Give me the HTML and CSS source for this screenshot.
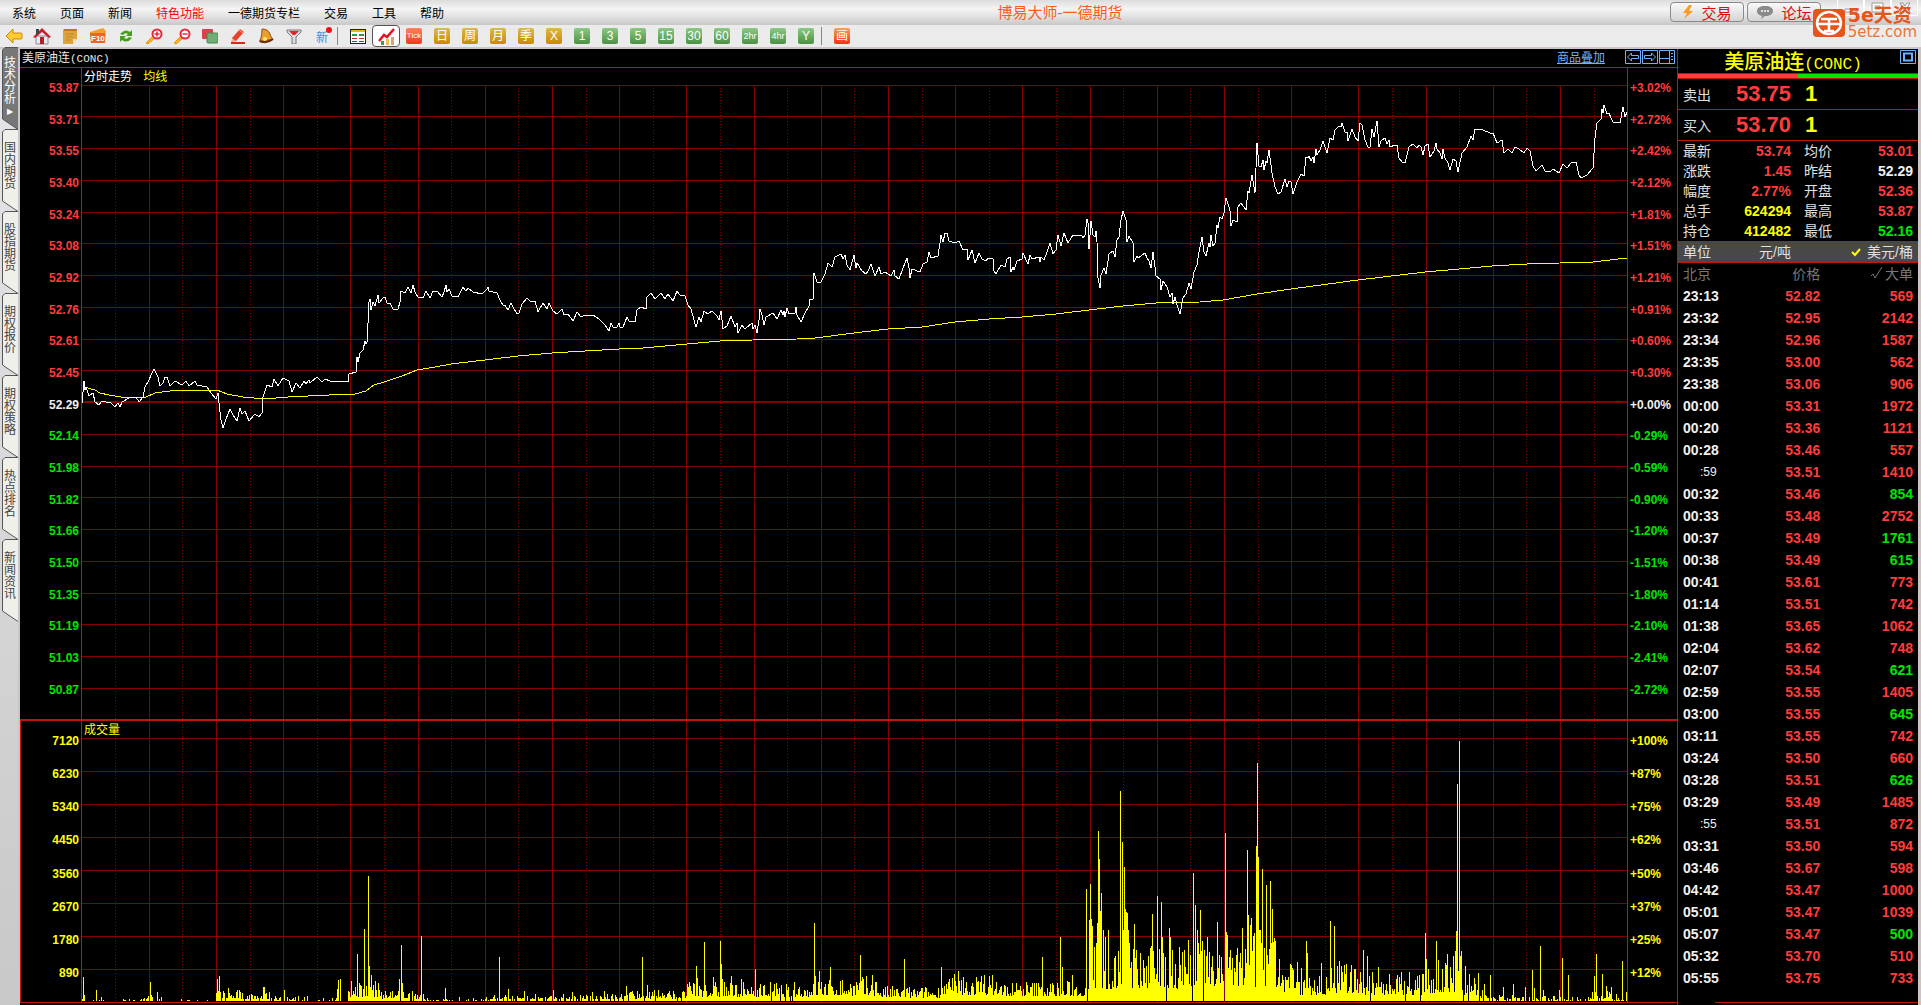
FILE: index.html
```html
<!DOCTYPE html>
<html lang="zh-CN">

<head>
    <meta charset="utf-8">
    <meta name="viewport" content="width=device-width, initial-scale=1" />
    <title>博易大师-一德期货</title>
    <link rel="stylesheet" href="styles.css">
</head>

<body>
    <header class="menubar">
        <nav class="menu">
            <button>系统</button>
            <button>页面</button>
            <button>新闻</button>
            <button class="hot">特色功能</button>
            <button>一德期货专栏</button>
            <button>交易</button>
            <button>工具</button>
            <button>帮助</button>
        </nav>
        <h1 class="app-title">博易大师-一德期货</h1>
        <div class="quick">
            <button class="pill">
                <svg width="12" height="14" viewBox="0 0 12 14"><path d="M7 0 1 8h4l-3 6 9-8H7l3-6z" fill="#ff9a1e" /></svg>交易
            </button>
            <button class="pill">
                <svg width="18" height="14" viewBox="0 0 18 14"><path d="M9 1c5 0 8 2 8 5s-3 5-8 5l-4 3 1-3C3 10 1 9 1 6s3-5 8-5z" fill="#8a8a8a" /><path d="M5 6h2M8 6h2M11 6h2" stroke="#fff" stroke-width="1.5" /></svg>论坛
            </button>
        </div>
        <div class="window-buttons">
            <button aria-label="最小化"><svg width="24" height="16" viewBox="0 0 24 16"><path d="M6 9h12v3H6z" fill="#fff" stroke="#999" /></svg></button>
            <button aria-label="最大化"><svg width="24" height="16" viewBox="0 0 24 16"><path d="M6 3h11v9H6zM9 6h5v3H9z" fill="#fff" stroke="#999" fill-rule="evenodd" /></svg></button>
            <button aria-label="关闭"><svg width="24" height="16" viewBox="0 0 24 16"><path d="M7 3h3l2 3 2-3h3l-3 5 3 4h-3l-2-3-2 3H7l3-4z" fill="#fff" stroke="#999" /></svg></button>
        </div>
        <div class="brand">
            <svg width="32" height="28" viewBox="0 0 32 28">
                <rect width="32" height="28" rx="4" fill="#e4551b" />
                <ellipse cx="16" cy="14" rx="12" ry="11" fill="none" stroke="#fff" stroke-width="2.5" />
                <path d="M8 10h16M4 15h24M16 10v12M11 22h10" fill="none" stroke="#fff" stroke-width="2.5" />
            </svg>
            <div class="brand-text"><b>5e天资</b><span>5etz.com</span></div>
        </div>
    </header>

    <div class="toolbar">
        <button aria-label="后退"><svg width="18" height="16" viewBox="0 0 18 16"><path d="M1 8 8 1v4h8q1 0 1 1v4q0 1-1 1H8v4z" fill="#ffcb2e" stroke="#c98a10" /></svg></button>
        <button aria-label="首页"><svg width="18" height="18" viewBox="0 0 18 18"><path d="M3 9h12v8H3z" fill="#e9e9ee" stroke="#8a8a95" /><path d="M0 10 9 1l9 9-2 1-7-6-7 6z" fill="#cf1c2c" /><path d="M3 2h3v4L3 8z" fill="#444" /><path d="M7 10h4v7H7z" fill="#b3202d" /></svg></button>
        <button aria-label="便签"><svg width="16" height="16" viewBox="0 0 16 16"><path d="M2 1h13v10l-4 5H1V2z" fill="#dca43a" /><path d="M11 16v-5h4z" fill="#fbe3a2" /><path d="M2 1h13v2H2z" fill="#b97d1d" /><path d="M4 6h8M4 9h7M4 12h5" stroke="#c08628" /></svg></button>
        <button aria-label="F10"><svg width="18" height="16" viewBox="0 0 18 16"><path d="M1 4 14 0l3 3-1 12H2z" fill="#f2a12a" /><path d="M1 5h15v10H2z" fill="#ee6426" /><text x="2" y="13" class="f10">F10</text></svg></button>
        <button aria-label="刷新"><svg width="16" height="16" viewBox="0 0 16 16"><path d="M2 6q5-6 10-2l2-2v6H8l2-2Q7 4 5 7zM14 10q-5 6-10 2l-2 2V8h6l-2 2q3 2 5-1z" fill="#45a01e" /></svg></button>
        <button aria-label="放大"><svg width="18" height="17" viewBox="0 0 18 17"><path d="m1 15 7-7 2 2-7 6z" fill="#ffb52a" stroke="#e39210" /><circle cx="12" cy="6" r="4.500" fill="#fff" stroke="#e8283a" stroke-width="2" /><path d="M9.500 6h5M12 3.500v5" stroke="#e8283a" stroke-width="1.500" /></svg></button>
        <button aria-label="缩小"><svg width="18" height="17" viewBox="0 0 18 17"><path d="m1 15 7-7 2 2-7 6z" fill="#ffb52a" stroke="#e39210" /><circle cx="12" cy="6" r="4.500" fill="#fff" stroke="#e8283a" stroke-width="2" /><path d="M9.500 6h5" stroke="#e8283a" stroke-width="1.500" /></svg></button>
        <button aria-label="叠加"><svg width="16" height="16" viewBox="0 0 16 16"><rect x="0" y="1" width="11" height="10" rx="1" fill="#dc4149" /><rect x="5" y="5" width="11" height="10" rx="1" fill="#6fae76" stroke="#448a4e" /></svg></button>
        <button aria-label="画笔"><svg width="16" height="17" viewBox="0 0 16 17"><path d="M2 10 10 1l4 3-8 9-4 1z" fill="#e7432b" /><path d="m2 10 4 3-5 2z" fill="#e9b58a" /><path d="m9 2 4 3" stroke="#ff9d80" /><path d="M1 15h14" stroke="#d52a1c" stroke-width="2" /></svg></button>
        <button aria-label="预警"><svg width="16" height="16" viewBox="0 0 16 16"><path d="M4 1q6 0 8 5 1 4 3 5L2 14q-1-1 1-4 1-4 1-9z" fill="#e8a02c" stroke="#9a4a10" /><path d="M2 13q7 3 13-2" fill="none" stroke="#74290a" stroke-width="2" /><circle cx="7" cy="11" r="2" fill="#ffe27a" /></svg></button>
        <button aria-label="筛选"><svg width="16" height="16" viewBox="0 0 16 16"><path d="M1 2h14v2l-5 5v7H6V9L1 4z" fill="#dadde0" stroke="#777" /><path d="M3 3h10L9 7H7z" fill="#e3232c" /></svg></button>
        <button aria-label="新功能"><span class="new">新</span></button>
        <span class="sep"></span>
        <button aria-label="报价表"><svg width="16" height="15" viewBox="0 0 16 15" shape-rendering="crispEdges"><rect x="0" y="0" width="16" height="15" fill="#fff" stroke="#222" stroke-width="2" /><path d="M1 1h14v2H1z" fill="#f0b325" /><path d="M2 6h5M9 6h5" stroke="#299b38" stroke-width="2" /><path d="M2 9h5M9 9h5" stroke="#cc2a2a" stroke-width="1" /><path d="M2 12h5M9 12h5" stroke="#2554b4" stroke-width="1" /></svg></button>
        <button class="active" aria-label="分时图"><svg width="18" height="17" viewBox="0 0 18 17"><path d="M4 13h3v4H4z" fill="#3f9e43" /><path d="M9 11h3v6H9z" fill="#f1bb55" /><path d="M14 9h3v8h-3z" fill="#d3aa6b" /><path d="m2 13 5-6 3 2 7-8" fill="none" stroke="#e6141d" stroke-width="2.500" /></svg></button>
        <button><span class="key tick">Tick</span></button>
        <button><span class="key gold">日</span></button>
        <button><span class="key gold">周</span></button>
        <button><span class="key gold">月</span></button>
        <button><span class="key gold">季</span></button>
        <button><span class="key gold">X</span></button>
        <button><span class="key">1</span></button>
        <button><span class="key">3</span></button>
        <button><span class="key">5</span></button>
        <button><span class="key">15</span></button>
        <button><span class="key">30</span></button>
        <button><span class="key">60</span></button>
        <button><span class="key small">2hr</span></button>
        <button><span class="key small">4hr</span></button>
        <button><span class="key">Y</span></button>
        <span class="sep"></span>
        <button><span class="key draw">画</span></button>
    </div>

    <main class="workspace">
        <nav class="tabs">
            <button class="on"><svg viewBox="0 0 16 83"><path d="M16 .5H3L.5 3v69L16 82.500" /></svg><span>技术分析</span><i>▶</i></button>
            <button><svg viewBox="0 0 16 83"><path d="M16 .5H3L.5 3v69L16 82.500" /></svg><span>国内期货</span></button>
            <button><svg viewBox="0 0 16 83"><path d="M16 .5H3L.5 3v69L16 82.500" /></svg><span>股指期货</span></button>
            <button><svg viewBox="0 0 16 83"><path d="M16 .5H3L.5 3v69L16 82.500" /></svg><span>期权报价</span></button>
            <button><svg viewBox="0 0 16 83"><path d="M16 .5H3L.5 3v69L16 82.500" /></svg><span>期权策略</span></button>
            <button><svg viewBox="0 0 16 83"><path d="M16 .5H3L.5 3v69L16 82.500" /></svg><span>热点排名</span></button>
            <button><svg viewBox="0 0 16 83"><path d="M16 .5H3L.5 3v69L16 82.500" /></svg><span>新闻资讯</span></button>
        </nav>

        <section class="chart">
            <div class="chart-head">
                <span>美原油连<span class="code">(CONC)</span></span>
                <a href="#overlay">商品叠加</a>
                <div class="nav-icons">
                    <button aria-label="上一个"><svg width="16" height="14" viewBox="0 0 16 14"><path d="M.5.5h15v13H.5zM2.500 7l4-4v2.500h7v3h-7V11z" /></svg></button>
                    <button aria-label="下一个"><svg width="16" height="14" viewBox="0 0 16 14"><path d="M.5.5h15v13H.5zM13.500 7l-4-4v2.500h-7v3h7V11z" /></svg></button>
                    <button aria-label="布局"><svg width="16" height="14" viewBox="0 0 16 14"><path d="M.5.5h15v13H.5zM.5 8.500h10M10.500.5v13M12 3.500h2M12 6.500h2M12 9.500h2" /></svg></button>
                </div>
            </div>
            <div class="pane price">
                <ol class="axis left" id="prices"></ol>
                <div class="plot">
                    <p class="legend">分时走势 <span>均线</span></p>
                    <svg viewBox="82 68 1545 651" preserveAspectRatio="none">
                        <path class="grid" id="priceGrid" />
                        <path class="grid dotted" id="priceDots" />
                        <path class="zero" d="M82 402H1627" />
                        <polyline class="avg" id="avgLine" />
                        <polyline class="last" id="lastLine" />
                    </svg>
                </div>
                <ol class="axis right" id="percents"></ol>
            </div>
            <div class="pane volume">
                <ol class="axis left" id="volumes"></ol>
                <div class="plot">
                    <p class="legend"><span>成交量</span></p>
                    <svg viewBox="82 721 1545 281" preserveAspectRatio="none">
                        <path class="grid" id="volumeGrid" />
                        <path class="grid dotted" id="volumeDots" />
                        <path class="bars" id="bars" />
                    </svg>
                </div>
                <ol class="axis right" id="shares"></ol>
            </div>
        </section>

        <aside class="quote">
            <div class="quote-head">
                <h2>美原油连<span>(CONC)</span></h2>
                <button aria-label="还原"><svg width="16" height="14" viewBox="0 0 16 14"><path d="M.5.5h15v13H.5z" /><path d="M4 3.500h8v7H4z" stroke-width="2" /></svg></button>
            </div>
            <div class="ratio"></div>
            <div class="offer"><span>卖出</span><b>53.75</b><b class="yellow">1</b></div>
            <div class="offer"><span>买入</span><b>53.70</b><b class="yellow">1</b></div>
            <div class="stats">
                <span>最新</span><b>53.74</b><span>均价</span><b>53.01</b>
                <span>涨跌</span><b>1.45</b><span>昨结</span><b class="white">52.29</b>
                <span>幅度</span><b>2.77%</b><span>开盘</span><b>52.36</b>
                <span>总手</span><b class="yellow">624294</b><span>最高</span><b>53.87</b>
                <span>持仓</span><b class="yellow">412482</b><span>最低</span><b class="green">52.16</b>
            </div>
            <div class="unit">
                <span>单位</span><span>元/吨</span>
                <span><svg width="10" height="10" viewBox="0 0 10 10"><path d="m1 5 3 3 5-6" /></svg>美元/桶</span>
            </div>
            <table class="ticks">
                <thead>
                    <tr><th>北京</th><th>价格</th><th><svg width="12" height="12" viewBox="0 0 12 12"><path d="m0 9 2-2 2 4L11 0" /></svg>大单</th></tr>
                </thead>
                <tbody id="ticks"></tbody>
            </table>
            <div class="quote-foot"></div>
        </aside>
    </main>
    <script src="script.js"></script>
</body>

</html>
```

FILE: styles.css
```css
* {
    box-sizing: border-box;
}

body {
    margin: 0;
    height: 100vh;
    display: flex;
    flex-direction: column;
    overflow: hidden;
    font: 12px "Liberation Sans", "Noto Sans CJK SC", sans-serif;
    background: #ebebeb;
    color: #000;
}

button {
    border: 0;
    padding: 0;
    background: none;
    font: inherit;
    color: inherit;
}

h1, h2, p, ol {
    margin: 0;
    padding: 0;
    font-weight: normal;
    list-style: none;
}

svg {
    flex: none;
}

/* menu bar */
.menubar {
    position: relative;
    flex: none;
    height: 25px;
    display: flex;
    background: linear-gradient(#dcdcdc, #f4f4f4 35%, #e6e6e6 60%, #c8c8c8);
}

.menu {
    display: flex;
}

.menu button {
    padding: 0 12px;
}

.menu .hot {
    color: #f00;
}

.app-title {
    flex: 1;
    padding-right: 6px;
    text-align: center;
    font-size: 15px;
    line-height: 25px;
    color: #ff5a1e;
}

.quick {
    display: flex;
    gap: 3px;
    padding-top: 2px;
}

.pill {
    width: 74px;
    height: 20px;
    display: flex;
    align-items: center;
    justify-content: center;
    gap: 7px;
    border: 1px solid #8a8a8a;
    border-radius: 4px;
    background: linear-gradient(#fafafa, #d4d4d4);
    color: #d80f0f;
    font-size: 15px;
}

.window-buttons {
    display: flex;
    padding: 0 3px 0 16px;
}

.window-buttons button {
    width: 27px;
    height: 16px;
    border: 1px solid #fff;
    border-top: 0;
}

.brand {
    position: absolute;
    z-index: 1;
    right: 4px;
    top: 9px;
    display: flex;
    gap: 3px;
}

.brand-text {
    display: flex;
    flex-direction: column;
    margin-top: -3px;
    font-family: "DejaVu Sans", "Noto Sans CJK SC", sans-serif;
    color: #e8743c;
}

.brand-text b {
    font-size: 19px;
    line-height: 19px;
    color: #e4551b;
}

.brand-text span {
    font-size: 15px;
    line-height: 15px;
}

/* toolbar */
.toolbar {
    flex: none;
    height: 24px;
    display: flex;
    border-bottom: 2px solid #cdc5c5;
}

.toolbar button {
    width: 28px;
    display: flex;
    align-items: center;
    justify-content: center;
}

.toolbar .active {
    border: 1px solid #555;
    border-radius: 4px;
    background: #fff;
}

.sep {
    width: 2px;
    margin: 2px 5px 2px 1px;
    border-left: 1px solid #888;
}

.f10 {
    font: bold 8px "Liberation Sans", sans-serif;
    fill: #fff;
}

.new {
    position: relative;
    color: #3d8fe6;
}

.new::after {
    content: "";
    position: absolute;
    top: -1px;
    right: -4px;
    width: 6px;
    height: 6px;
    border-radius: 50%;
    background: #f01414;
}

.key {
    width: 16px;
    height: 16px;
    border-radius: 2px;
    overflow: hidden;
    font: 12px/16px "Liberation Sans", "Noto Sans CJK SC", sans-serif;
    text-align: center;
    color: #fff;
    background: linear-gradient(#8cc885, #4b9143);
}

.key.gold {
    background: linear-gradient(#d8bb50, #cc8800);
}

.key.tick, .key.small {
    font-size: 9px;
}

.key.tick {
    font-size: 8px;
    background: linear-gradient(#ff8060, #ee3a1e);
}

.key.draw {
    background: linear-gradient(#ffa050, #f23018);
}

/* workspace */
.workspace {
    flex: 1;
    min-height: 0;
    display: grid;
    grid-template-columns: 18px 1fr 240px;
    padding-right: 3px;
    background: #cdc5c5;
}

.tabs {
    padding-left: 2px;
    background: linear-gradient(#e6e6ea, #c8c8c8);
}

.tabs button {
    position: relative;
    display: flex;
    flex-direction: column;
    align-items: center;
    justify-content: flex-start;
    width: 16px;
    height: 82px;
    padding-top: 13px;
    color: #444;
}

.tabs svg {
    position: absolute;
    top: 0;
    left: 0;
    width: 16px;
    height: 83px;
    fill: #f0f0ea;
    stroke: #555;
}

.tabs span {
    position: relative;
    width: 12px;
    line-height: 12px;
    word-break: break-all;
}

.tabs .on {
    height: 80px;
    padding-top: 8px;
    color: #fff;
}

.tabs .on svg {
    top: -2px;
    fill: #777;
}

.tabs i {
    position: relative;
    font: 8px/14px "DejaVu Sans", sans-serif;
}

.chart {
    display: flex;
    flex-direction: column;
    margin-left: 2px;
    padding-bottom: 2px;
    border-right: 1px solid #c41410;
    background: #000;
    color: #e8e8e8;
}

.chart-head {
    flex: none;
    height: 19px;
    display: flex;
    padding: 1px 2px 0;
    line-height: 16px;
    border-bottom: 1px solid #c41410;
}

.code {
    font-family: "Liberation Mono", monospace;
    font-size: 11px;
}

.chart-head a {
    margin: 0 20px 0 auto;
    color: #6fb1ff;
}

.nav-icons {
    display: flex;
    align-items: flex-start;
    gap: 1px;
}

.nav-icons button, .quote-head button {
    height: 14px;
    line-height: 0;
}

.nav-icons svg, .quote-head svg {
    fill: none;
    stroke: #6fb1ff;
}

.pane {
    display: grid;
    grid-template-columns: 61px 1fr 50px;
    min-height: 0;
}

.price {
    flex: 651 1 0;
}

.volume {
    flex: 281 1 0;
    border: solid #c41410;
    border-width: 2px 0 1px 1px;
    grid-template-columns: 60px 1fr 50px;
}

.axis {
    display: flex;
    flex-direction: column;
    justify-content: space-between;
    padding: 12px 2px 21px;
    font-weight: bold;
    line-height: 16px;
    color: #ff3c3c;
}

.left {
    text-align: right;
}

.right {
    border-left: 1px solid #c41410;
}

.volume .axis, .yellow {
    color: #ff0;
}

.white {
    color: #f0f0f0;
}

.green {
    color: #00e600;
}

.plot {
    position: relative;
    min-height: 0;
    border-left: 1px solid #c41410;
}

.plot svg {
    display: block;
    width: 100%;
    height: 100%;
}

.legend {
    position: absolute;
    top: 0;
    left: 2px;
    line-height: 18px;
    color: #fff;
}

.legend span {
    color: #ff0;
}

.price .legend span {
    margin-left: 8px;
}

.plot path, .plot polyline {
    fill: none;
    stroke: #860000;
    shape-rendering: crispEdges;
    vector-effect: non-scaling-stroke;
}

.plot .dotted {
    stroke-dasharray: 1 2;
}

.plot .zero {
    stroke-width: 2px;
}

.plot .avg, .plot .bars {
    stroke: #ff0;
}

.plot .last {
    stroke: #fff;
}

/* quote panel */
.quote {
    display: flex;
    flex-direction: column;
    background: #000;
    color: #e0e0e0;
    font-size: 14px;
    overflow: hidden;
}

.quote-head {
    display: flex;
    height: 25px;
    padding: 1px 2px 0 0;
    border-bottom: 1px solid #c41410;
}

.quote-head h2 {
    flex: 1;
    padding-left: 8px;
    text-align: center;
    font-size: 20px;
    font-weight: 500;
    line-height: 24px;
    color: #ff0;
}

.quote-head h2 span {
    font: 16px "Liberation Mono", monospace;
}

.ratio {
    height: 5px;
    border-bottom: 1px solid #c41410;
    background: linear-gradient(90deg, #ff3c3c 50%, #00e600 50%);
}

.offer {
    display: grid;
    grid-template-columns: 28px 80px 1fr;
    align-items: center;
    height: 31px;
    padding-left: 5px;
    border-bottom: 1px solid #c41410;
}

.offer b {
    font-size: 22px;
    text-align: right;
    color: #ff3c3c;
}

.offer .yellow {
    padding-left: 14px;
    text-align: left;
    color: #ff0;
}

.stats {
    display: grid;
    grid-template-columns: 28px 80px 28px 1fr;
    padding: 0 5px;
    line-height: 20px;
    border-bottom: 1px solid #c41410;
}

.stats b {
    text-align: right;
    color: #ff3c3c;
}

.stats span:nth-of-type(even) {
    padding-left: 13px;
    white-space: nowrap;
}

.stats .yellow {
    color: #ff0;
}

.stats .white {
    color: #f0f0f0;
}

.stats .green {
    color: #00e600;
}

.unit {
    display: grid;
    grid-template-columns: 28px 80px 1fr;
    padding: 0 5px;
    line-height: 20px;
    text-align: right;
    background: #484848;
    border-bottom: 1px solid #c41410;
}

.unit svg {
    margin-right: 6px;
    fill: none;
    stroke: #ff0;
    stroke-width: 2;
}

.ticks {
    width: 100%;
    border-collapse: collapse;
    table-layout: fixed;
    font-weight: bold;
    color: #ff3c3c;
}

.ticks th, .ticks td {
    height: 22px;
    padding: 0 5px 0 0;
    line-height: 20px;
    text-align: right;
}

.ticks th {
    width: 92px;
    font-weight: normal;
    color: #777;
}

.ticks th:first-child {
    width: 54px;
}

.ticks th:first-child, .ticks td:first-child {
    padding: 0 0 0 5px;
    text-align: left;
    color: #f0f0f0;
}

.ticks th:first-child {
    color: #777;
}

.ticks td.second {
    padding-left: 22px;
    font-size: 12px;
    font-weight: normal;
}

.ticks th svg {
    margin-right: 2px;
    fill: none;
    stroke: #777;
}

.quote-foot {
    height: 3px;
    margin: auto 0 0 37px;
    border-top: 1px solid #c41410;
}
```

FILE: script.js
```js
function g(i) { return document.getElementById(i); }

// axis labels, top to bottom
var prices = "53.87 53.71 53.55 53.40 53.24 53.08 52.92 52.76 52.61 52.45 52.29 52.14 51.98 51.82 51.66 51.50 51.35 51.19 51.03 50.87".split(" ");
var percents = "+3.02% +2.72% +2.42% +2.12% +1.81% +1.51% +1.21% +0.91% +0.60% +0.30% +0.00% -0.29% -0.59% -0.90% -1.20% -1.51% -1.80% -2.10% -2.41% -2.72%".split(" ");

function axis(id, list, zero) {
    list.forEach(function (t, i) {
        var li = document.createElement("li");
        li.textContent = t;
        if (zero) li.className = i < zero ? "" : i == zero ? "white" : "green";
        g(id).appendChild(li);
    });
}
axis("prices", prices, 10);
axis("percents", percents, 10);
axis("volumes", "7120 6230 5340 4450 3560 2670 1780 890".split(" "));
axis("shares", "+100% +87% +75% +62% +50% +37% +25% +12%".split(" "));

// grid: 23 columns, each halved by a dotted line
function grid(solid, dots, top, bottom, first, step, rows) {
    var s = "", d = "", i, x;
    for (i = 0; i < rows; i++) s += "M82 " + (Math.floor(first + step * i) + 0.5) + "H1627";
    for (i = 0; i < 23; i++) {
        x = 81.5 + 67.2 * i;
        if (i) s += "M" + (Math.round(x) + 0.5) + " " + top + "V" + bottom;
        d += "M" + (Math.round(x + 33.6) + 0.5) + " " + top + "V" + bottom;
    }
    g(solid).setAttribute("d", s);
    g(dots).setAttribute("d", d);
}
grid("priceGrid", "priceDots", 85, 719, 85, 31.75, 20);
grid("volumeGrid", "volumeDots", 721, 1002, 738, 33, 8);

g("lastLine").setAttribute("points", "82,403 84,381 85,390 86,387 89,396 93,393 95,402 99,405 102,401 106,402 111,403 115,407 118,403 120,407 122,402 131,397 136,397 139,402 143,397 145,387 149,380 151,375 154,369 158,377 160,386 163,383 165,377 167,377 170,386 175,381 182,385 186,381 189,386 195,381 197,385 207,387 211,393 216,399 218,393 220,412 221,420 223,428 226,419 230,409 233,415 237,421 240,408 242,414 245,411 249,421 255,414 259,417 262,413 263,397 267,385 272,387 274,379 278,386 283,378 289,381 292,392 296,383 300,388 304,381 306,384 309,380 310,383 317,377 322,382 325,379 330,381 348,382 349,374 356,372 357,357 358,362 360,353 363,350 365,341 366,344 367,342 368,323 369,302 370,299 371,310 373,302 375,306 378,295 379,303 383,298 385,297 387,303 390,303 393,309 398,309 400,302 401,291 405,293 408,287 411,293 413,285 415,292 418,297 423,298 426,291 430,298 433,291 437,291 442,297 444,292 446,285 447,292 449,289 452,296 458,297 463,287 466,291 468,288 473,292 482,294 487,289 488,287 489,291 497,293 500,300 503,305 505,305 508,310 511,303 513,307 517,314 519,313 522,304 527,298 530,301 535,301 538,312 543,303 547,309 549,303 553,311 557,314 562,309 564,315 568,314 573,321 577,312 581,317 585,315 593,315 599,319 605,325 609,331 611,323 613,327 617,327 619,323 620,327 623,327 627,317 629,321 635,322 637,310 641,307 646,309 647,297 651,293 655,299 661,293 665,299 668,294 673,301 677,291 680,295 685,296 688,305 691,309 694,320 696,327 699,317 701,322 704,311 708,314 712,311 717,316 719,320 721,311 723,329 727,326 731,316 735,327 737,323 738,333 742,325 745,329 752,323 753,329 755,325 757,333 759,320 760,309 762,315 764,325 766,317 773,313 777,319 781,310 783,315 784,311 785,317 787,308 789,314 795,313 796,307 797,315 801,322 805,313 809,306 810,299 813,300 814,273 817,282 821,282 825,274 828,263 832,267 835,257 841,254 843,259 845,255 847,265 850,270 854,255 856,268 857,263 862,271 866,274 868,271 871,264 875,276 879,267 881,274 885,272 891,276 894,270 895,276 899,279 903,268 907,258 909,268 910,278 912,269 920,272 923,264 927,262 929,252 931,258 938,256 940,243 941,235 943,242 945,233 947,233 949,241 955,243 959,241 963,250 967,249 968,260 972,250 975,263 979,253 982,259 986,261 988,258 993,259 994,271 996,274 1001,265 1005,267 1007,259 1010,257 1011,272 1013,267 1014,270 1017,261 1022,259 1023,253 1028,264 1030,255 1032,259 1039,257 1040,262 1041,257 1044,260 1047,252 1050,243 1053,254 1056,250 1058,235 1061,246 1064,233 1068,243 1073,235 1082,236 1083,238 1085,235 1087,219 1088,223 1089,249 1091,221 1093,235 1095,237 1096,231 1097,242 1098,278 1100,288 1101,275 1104,268 1106,274 1109,254 1113,251 1115,257 1117,240 1119,237 1121,220 1123,211 1126,220 1127,242 1129,236 1133,243 1134,262 1137,256 1138,258 1145,253 1147,258 1149,261 1151,268 1153,252 1155,267 1156,276 1160,279 1161,290 1163,281 1167,287 1170,297 1172,293 1173,304 1175,297 1177,305 1180,314 1183,298 1186,294 1189,283 1191,289 1194,272 1197,265 1199,252 1202,237 1204,252 1206,256 1209,243 1210,247 1211,235 1213,246 1215,243 1217,225 1218,228 1220,217 1222,219 1224,213 1226,198 1229,207 1230,211 1231,226 1233,220 1237,222 1238,207 1241,203 1246,210 1248,191 1249,193 1252,175 1255,193 1256,168 1257,143 1259,166 1261,167 1263,160 1264,170 1266,161 1267,163 1269,150 1272,173 1275,187 1278,194 1281,192 1285,179 1287,187 1289,181 1291,182 1293,194 1297,182 1301,174 1304,176 1306,157 1308,158 1309,156 1311,161 1313,157 1314,163 1316,149 1317,155 1320,150 1323,141 1327,153 1330,138 1333,140 1335,130 1339,126 1341,127 1342,123 1345,132 1347,132 1348,141 1352,129 1355,137 1358,141 1360,123 1362,125 1365,140 1368,147 1370,147 1372,129 1374,137 1377,121 1379,147 1381,141 1385,138 1387,144 1389,140 1390,147 1395,145 1397,145 1399,158 1402,162 1405,163 1409,147 1413,144 1417,148 1419,145 1421,147 1423,155 1425,146 1428,144 1430,157 1434,151 1436,143 1437,149 1440,153 1442,159 1443,149 1445,158 1448,163 1450,170 1453,159 1456,161 1458,172 1462,153 1467,147 1471,136 1473,140 1475,129 1483,130 1490,133 1493,133 1497,143 1502,140 1504,153 1508,149 1512,153 1515,147 1519,149 1524,153 1527,148 1530,151 1533,166 1536,171 1542,165 1545,171 1550,172 1553,169 1559,173 1563,164 1567,168 1571,163 1576,162 1579,175 1581,178 1587,175 1593,168 1595,138 1597,123 1601,119 1602,109 1603,113 1604,105 1607,114 1609,113 1611,118 1613,122 1620,123 1623,107 1625,117 1627,112");
g("avgLine").setAttribute("points", "84,387 95,390 100,393 109,395 121,397 146,397 155,393 170,391 196,390 217,390 227,394 243,397 264,399 288,397 329,395 355,394 366,391 374,385 384,382 402,376 417,370 435,367 451,364 485,360 518,356 552,353 585,351 619,349 643,348 687,344 720,341 753,340 797,339 815,338 854,333 888,329 922,327 955,322 989,319 1022,317 1056,314 1089,310 1123,306 1156,303 1200,302 1223,300 1257,294 1291,289 1358,280 1425,272 1459,269 1492,266 1527,264 1593,262 1627,258");

// volume: [from, to, usual height, share of minutes traded]
var levels = [[82, 146, 2, .25], [146, 164, 5, .7], [164, 216, 2, .15], [216, 240, 9, .9], [240, 277, 7, .9], [277, 300, 4, .6],
    [300, 337, 4, .4], [348, 382, 13, 1], [382, 400, 8, 1], [400, 424, 8, .9], [424, 445, 2, .5], [445, 490, 3, .35],
    [490, 620, 5, .7], [620, 686, 8, .9], [686, 760, 14, 1], [760, 810, 14, .9], [810, 880, 18, 1], [880, 940, 11, 1],
    [940, 1000, 20, 1], [1000, 1085, 15, 1], [1085, 1180, 40, .97], [1180, 1278, 46, .97], [1278, 1300, 30, 1],
    [1300, 1330, 20, .96], [1330, 1356, 27, 1], [1356, 1425, 20, .97], [1425, 1462, 28, 1], [1462, 1475, 20, .9],
    [1475, 1495, 9, .8], [1495, 1590, 4, .55], [1590, 1612, 8, .8], [1612, 1627, 3, .6]];
// the busiest minutes, x:height
var peaks = "83:24 84:6 96:11 101:4 150:19 157:9 217:22 219:25 220:9 228:13 237:11 240:9 263:14 264:14 284:11 337:12 338:21 340:22 349:9 351:20 357:47 359:18 360:16 364:72 366:15 368:125 369:35 370:14 371:26 373:16 375:20 392:10 399:22 401:56 402:18 412:10 421:65 445:13 499:44 508:12 524:10 553:11 572:9 592:9 604:10 626:15 631:9 637:10 642:44 647:16 649:9 654:11 658:11 687:17 693:18 694:17 696:35 697:23 704:59 705:16 713:24 720:60 721:37 722:22 724:19 731:25 735:16 741:22 748:10 755:32 814:78 815:25 819:30 830:34 860:46 872:26 904:42 941:34 958:30 984:26 1042:44 1060:64 1062:34 1072:26 1086:112 1089:81 1090:117 1091:82 1092:75 1094:54 1096:58 1097:78 1098:170 1099:142 1100:90 1101:108 1103:71 1105:64 1108:71 1114:43 1118:50 1120:210 1122:159 1123:71 1124:134 1125:92 1126:89 1127:88 1128:71 1129:58 1133:52 1134:77 1135:43 1143:41 1148:45 1152:87 1157:105 1159:52 1161:99 1162:64 1165:44 1169:73 1170:64 1172:51 1179:54 1182:49 1188:61 1193:128 1195:96 1197:71 1198:58 1200:91 1201:50 1206:45 1209:49 1212:45 1217:79 1221:44 1225:168 1226:69 1227:66 1230:51 1236:46 1240:48 1242:73 1245:52 1247:151 1248:86 1250:76 1251:83 1253:65 1254:68 1256:155 1257:238 1258:144 1259:71 1260:71 1262:132 1264:53 1266:116 1267:46 1269:52 1270:120 1272:92 1273:59 1275:60 1279:42 1301:33 1306:60 1307:48 1319:25 1321:38 1330:80 1334:75 1339:40 1341:35 1345:27 1354:32 1360:29 1363:51 1367:45 1372:29 1378:34 1389:27 1401:29 1409:29 1415:21 1422:27 1425:68 1426:42 1428:32 1436:60 1438:41 1442:32 1447:47 1450:34 1453:45 1455:50 1456:70 1457:217 1459:260 1460:45 1461:50 1465:35 1469:27 1475:17 1478:28 1484:17 1490:26 1503:14 1513:17 1525:14 1532:31 1534:13 1540:55 1543:11 1559:11 1562:43 1568:26 1594:25 1596:47 1602:27 1606:15 1611:14 1616:7 1622:40 1626:9";
var seed = 7, heights = {};
function rnd() { seed = (seed * 16807) % 2147483647; return seed / 2147483647; }
levels.forEach(function (l) {
    for (var x = l[0]; x < l[1]; x++) {
        var on = rnd() < l[3], h = l[2] * (0.3 + Math.pow(rnd(), 2) * 1.1);
        if (on) heights[x] = Math.max(1, Math.round(h));
    }
});
peaks.split(" ").forEach(function (p) {
    p = p.split(":");
    heights[p[0]] = +p[1];
});
var bars = "";
for (var x in heights) bars += "M" + x + ".5 1001v-" + heights[x];
g("bars").setAttribute("d", bars);

// large trades; "-" marks a volume shown in green
var ticks = "23:13 52.82 569,23:32 52.95 2142,23:34 52.96 1587,23:35 53.00 562,23:38 53.06 906,00:00 53.31 1972,00:20 53.36 1121,00:28 53.46 557,:59 53.51 1410,00:32 53.46 -854,00:33 53.48 2752,00:37 53.49 -1761,00:38 53.49 -615,00:41 53.61 773,01:14 53.51 742,01:38 53.65 1062,02:04 53.62 748,02:07 53.54 -621,02:59 53.55 1405,03:00 53.55 -645,03:11 53.55 742,03:24 53.50 660,03:28 53.51 -626,03:29 53.49 1485,:55 53.51 872,03:31 53.50 594,03:46 53.67 598,04:42 53.47 1000,05:01 53.47 1039,05:07 53.47 -500,05:32 53.70 510,05:55 53.75 733";
ticks.split(",").forEach(function (t) {
    var c = t.split(" "), r = g("ticks").insertRow();
    r.insertCell().textContent = c[0];
    r.insertCell().textContent = c[1];
    r.insertCell().textContent = Math.abs(c[2]);
    if (c[0][0] == ":") r.cells[0].className = "second";
    if (c[2] < 0) r.cells[2].className = "green";
});
```
